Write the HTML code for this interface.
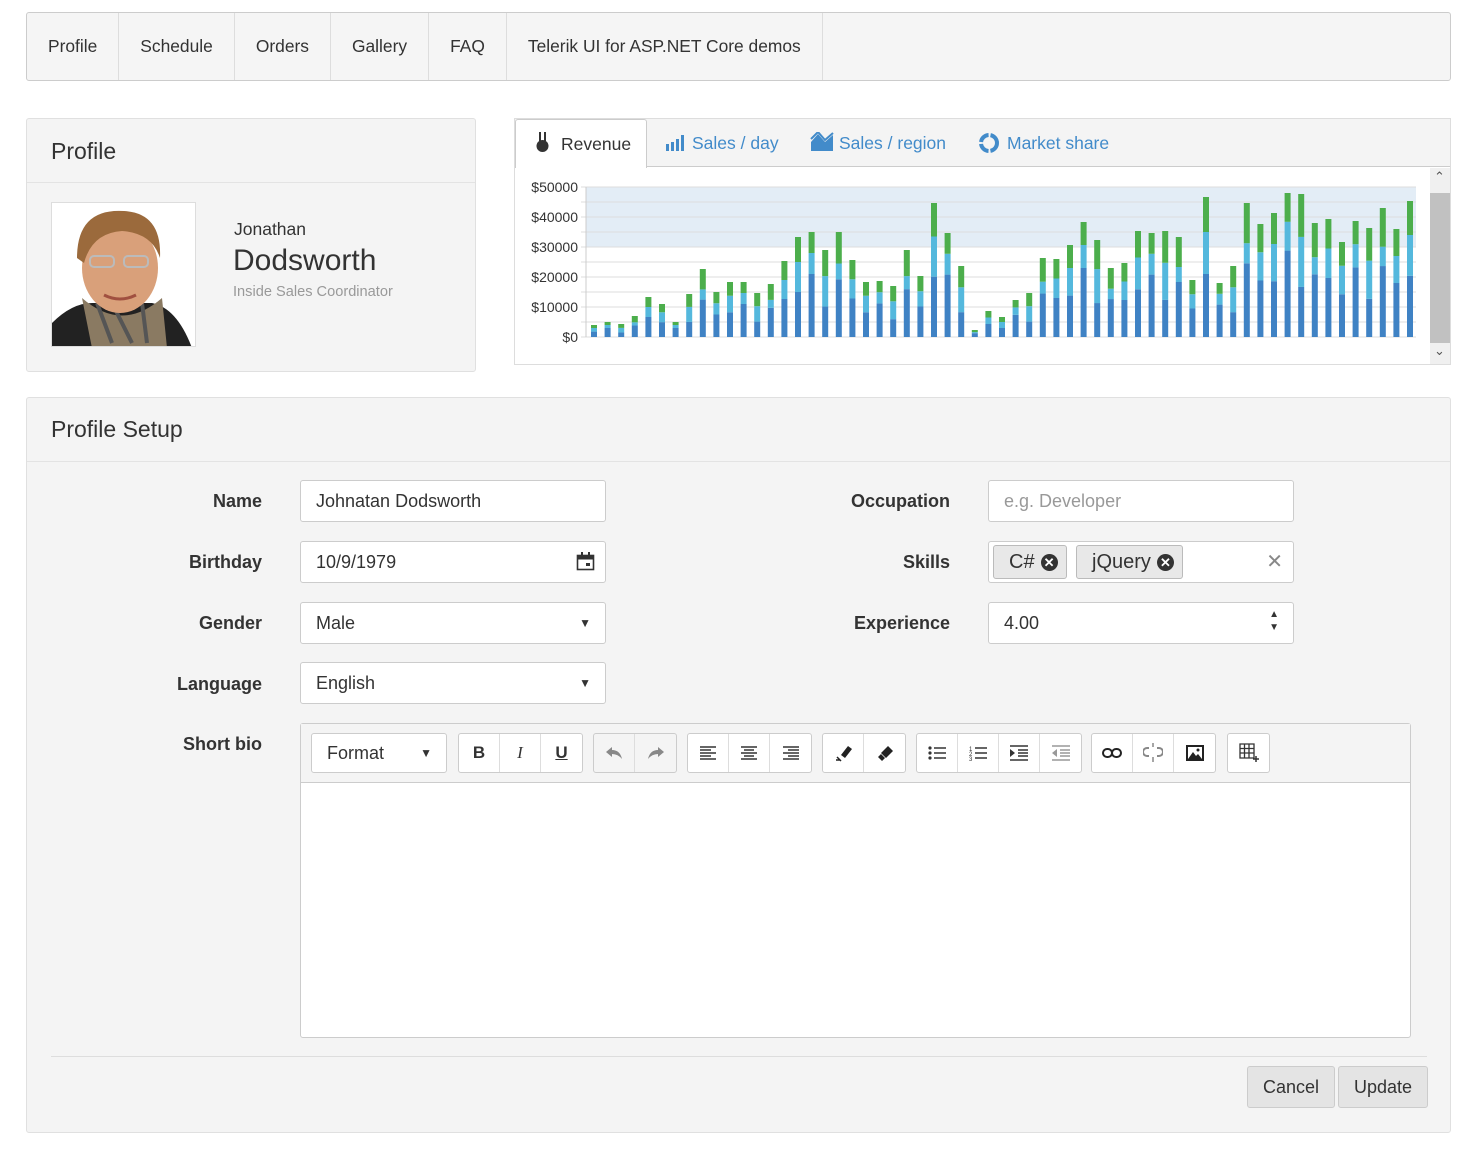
<!DOCTYPE html>
<html><head><meta charset="utf-8"><style>
*{box-sizing:border-box;margin:0;padding:0}
body{width:1478px;height:1151px;background:#fff;font-family:"Liberation Sans",sans-serif;color:#333;position:relative;overflow:hidden}
.abs{position:absolute}
.nav{left:26px;top:12px;width:1425px;height:69px;background:#f5f5f5;border:1px solid #ccc;border-radius:3px;display:flex}
.nav div{padding:0 21px;line-height:67px;font-size:17.4px;border-right:1px solid #ddd;color:#333}
.panel{background:#f4f4f4;border:1px solid #e0e0e0;border-radius:3px}
.ph{font-size:23px;color:#333;padding:0 24px;border-bottom:1px solid #e3e3e3}
.lbl{font-size:18px;font-weight:bold;text-align:right;width:200px}
.inp{background:#fff;border:1px solid #ccc;border-radius:3px;height:42px;font-size:18px;line-height:40px;padding:0 15px;color:#333}
.tb{position:absolute;top:9px;height:40px;background:#fff;border:1px solid #ccc;border-radius:3px;display:flex}
.tb span{width:41px;border-right:1px solid #ddd;display:flex;align-items:center;justify-content:center;font-size:17px}
.tb span:last-child{border-right:none}
.btn{background:#e4e4e4;border:1px solid #ccc;border-radius:3px;height:42px;line-height:40px;font-size:18px;padding:0 15px;color:#333}
.chip{background:#e8e8e8;border:1px solid #bbb;border-radius:3px;height:34px;line-height:32px;padding:0 8px 0 15px;font-size:20px;top:3px;position:absolute}
.x{display:inline-block;width:17px;height:17px;border-radius:50%;background:#333;color:#fff;font-size:13px;line-height:17px;text-align:center;vertical-align:1px;margin-left:6px;font-weight:bold}
</style></head><body>
<div class="abs nav"><div>Profile</div><div>Schedule</div><div>Orders</div><div>Gallery</div><div>FAQ</div><div>Telerik UI for ASP.NET Core demos</div></div>

<div class="abs panel" style="left:26px;top:118px;width:450px;height:254px">
 <div class="ph" style="height:64px;line-height:64px">Profile</div>
 <div class="abs" style="left:24px;top:83px;width:145px;height:145px;background:#fff;border:1px solid #ddd;overflow:hidden">
  <svg width="145" height="145" viewBox="0 0 145 145">
   <rect width="145" height="145" fill="#fff"/>
   <path d="M0 145 L0 120 Q20 100 40 100 L100 100 Q125 105 140 145Z" fill="#222"/>
   <path d="M30 95 Q70 130 110 95 L115 145 L40 145Z" fill="#8a7a62"/>
   <path d="M45 100 L60 140 M60 100 L80 140 M90 100 L95 140" stroke="#555" stroke-width="4"/>
   <ellipse cx="68" cy="65" rx="38" ry="45" fill="#d9a07a"/>
   <path d="M25 55 Q25 5 72 8 Q110 10 108 55 Q100 30 70 28 Q40 30 32 60Z" fill="#9b6a3c"/>
   <rect x="38" y="53" width="24" height="11" rx="4" fill="none" stroke="#bbb" stroke-width="2"/>
   <rect x="72" y="53" width="24" height="11" rx="4" fill="none" stroke="#bbb" stroke-width="2"/>
   <path d="M52 92 Q68 100 84 92" stroke="#a05040" stroke-width="3" fill="none"/>
  </svg>
 </div>
 <div class="abs" style="left:207px;top:100px;font-size:17.5px">Jonathan</div>
 <div class="abs" style="left:206px;top:125px;font-size:30px">Dodsworth</div>
 <div class="abs" style="left:206px;top:165px;font-size:14.6px;color:#999">Inside Sales Coordinator</div>
</div>

<div class="abs" style="left:514px;top:118px;width:937px;height:247px;border:1px solid #ddd;background:#fff">
 <div class="abs" style="left:0;top:0;width:935px;height:48px;background:#f4f4f4;border-bottom:1px solid #ccc"></div>
 <div class="abs" style="left:0;top:0;width:132px;height:49px;background:#fff;border:1px solid #ccc;border-bottom:none;border-radius:3px 3px 0 0;font-size:17.5px;line-height:48px;padding-left:45px">Revenue</div>
 <svg class="abs" style="left:18px;top:13px" width="20" height="22"><rect x="6" y="0" width="2" height="9" fill="#333"/><rect x="11" y="0" width="2" height="9" fill="#333"/><circle cx="9.5" cy="14" r="6" fill="#333"/></svg>
 <svg class="abs" style="left:150px;top:15px" width="20" height="18"><rect x="1" y="10" width="3" height="7" fill="#428bca"/><rect x="6" y="8" width="3" height="9" fill="#428bca"/><rect x="11" y="5" width="3" height="12" fill="#428bca"/><rect x="16" y="1" width="3" height="16" fill="#428bca"/></svg>
 <div class="abs" style="left:177px;top:14px;font-size:17.5px;color:#428bca">Sales / day</div>
 <svg class="abs" style="left:295px;top:13px" width="24" height="20"><path d="M1 19 L1 10 L8 2 L15 10 L23 3 L23 19Z" fill="#428bca"/><path d="M1 7 L8 0 L15 8 L23 1" stroke="#428bca" stroke-width="2" fill="none"/></svg>
 <div class="abs" style="left:324px;top:14px;font-size:17.5px;color:#428bca">Sales / region</div>
 <svg class="abs" style="left:463px;top:13px" width="22" height="22"><circle cx="11" cy="11" r="8" stroke="#428bca" stroke-width="4" fill="none" stroke-dasharray="11 2"/></svg>
 <div class="abs" style="left:492px;top:14px;font-size:17.5px;color:#428bca">Market share</div>
 <div class="abs" style="left:915px;top:49px;width:20px;height:196px;background:#f0f0f0"></div>
 <div class="abs" style="left:915px;top:74px;width:20px;height:150px;background:#c1c1c1"></div>
 <div class="abs" style="left:919px;top:50px;font-size:13px;color:#555">&#8963;</div>
 <div class="abs" style="left:919px;top:224px;font-size:13px;color:#555">&#8964;</div>
 <svg class="abs" style="left:0;top:49px" width="915" height="196" id="ch"></svg>
</div>

<div class="abs panel" style="left:26px;top:397px;width:1425px;height:736px">
 <div class="ph" style="height:64px;line-height:62px">Profile Setup</div>
 <div class="abs lbl" style="left:35px;top:93px">Name</div>
 <div class="abs inp" style="left:273px;top:82px;width:306px">Johnatan Dodsworth</div>
 <div class="abs lbl" style="left:35px;top:154px">Birthday</div>
 <div class="abs inp" style="left:273px;top:143px;width:306px">10/9/1979
  <svg class="abs" style="right:10px;top:10px" width="19" height="19"><rect x="1.5" y="3.5" width="16" height="14" fill="none" stroke="#333" stroke-width="1.6"/><rect x="1.5" y="3.5" width="16" height="4" fill="#333"/><rect x="5" y="0" width="2" height="5" fill="#333"/><rect x="12" y="0" width="2" height="5" fill="#333"/><rect x="10" y="11" width="4" height="3" fill="#333"/></svg></div>
 <div class="abs lbl" style="left:35px;top:215px">Gender</div>
 <div class="abs inp" style="left:273px;top:204px;width:306px">Male<span class="abs" style="right:14px;top:0;font-size:12px">&#9660;</span></div>
 <div class="abs lbl" style="left:35px;top:276px">Language</div>
 <div class="abs inp" style="left:273px;top:264px;width:306px">English<span class="abs" style="right:14px;top:0;font-size:12px">&#9660;</span></div>
 <div class="abs lbl" style="left:35px;top:336px">Short bio</div>

 <div class="abs lbl" style="left:723px;top:93px">Occupation</div>
 <div class="abs inp" style="left:961px;top:82px;width:306px;color:#999">e.g. Developer</div>
 <div class="abs lbl" style="left:723px;top:154px">Skills</div>
 <div class="abs inp" style="left:961px;top:143px;width:306px">
  <div class="chip" style="left:4px">C#<span class="x">✕</span></div>
  <div class="chip" style="left:87px">jQuery<span class="x">✕</span></div>
  <span class="abs" style="right:10px;top:0;color:#888;font-size:20px">✕</span></div>
 <div class="abs lbl" style="left:723px;top:215px">Experience</div>
 <div class="abs inp" style="left:961px;top:204px;width:306px">4.00<span class="abs" style="right:14px;top:-3px;font-size:10px;line-height:13px;padding-top:8px">&#9650;<br>&#9660;</span></div>

 <div class="abs" style="left:273px;top:325px;width:1111px;height:315px;background:#fff;border:1px solid #ccc;border-radius:3px">
  <div style="height:59px;background:#f4f4f4;border-bottom:1px solid #ccc;position:relative">
   <div class="tb" style="left:10px;width:136px;font-size:18px;line-height:38px;padding-left:15px;display:block">Format<div style="position:absolute;right:14px;top:0;font-size:12px">&#9660;</div></div>
   <div class="tb" style="left:157px"><span><b>B</b></span><span><i style="font-family:'Liberation Serif'">I</i></span><span><u><b>U</b></u></span></div>
   <div class="tb" style="left:292px;background:#f4f4f4"><span><svg width="18" height="14"><path d="M1 6 L7 1 L7 4 Q15 4 17 13 Q13 8 7 8 L7 11Z" fill="#888"/></svg></span><span><svg width="18" height="14"><path d="M17 6 L11 1 L11 4 Q3 4 1 13 Q5 8 11 8 L11 11Z" fill="#888"/></svg></span></div>
   <div class="tb" style="left:386px">
    <span><svg width="16" height="14"><path d="M0 1h16M0 4h11M0 7h16M0 10h11M0 13h16" stroke="#333" stroke-width="1.4"/></svg></span>
    <span><svg width="16" height="14"><path d="M0 1h16M3 4h10M0 7h16M3 10h10M0 13h16" stroke="#333" stroke-width="1.4"/></svg></span>
    <span><svg width="16" height="14"><path d="M0 1h16M5 4h11M0 7h16M5 10h11M0 13h16" stroke="#333" stroke-width="1.4"/></svg></span></div>
   <div class="tb" style="left:521px">
    <span><svg width="20" height="20"><path d="M8 12 L15 3 L19 6 L12 15Z" fill="#222"/><path d="M4 14 L8 18 M3 17 h4" stroke="#222" stroke-width="1.5"/></svg></span>
    <span><svg width="20" height="20"><path d="M6 10 L13 3 L18 8 L11 15Z M3 14 L6 11 L10 15 L7 18Z" fill="#222"/></svg></span></div>
   <div class="tb" style="left:615px">
    <span><svg width="18" height="14"><circle cx="2" cy="2" r="1.6" fill="#333"/><circle cx="2" cy="7" r="1.6" fill="#333"/><circle cx="2" cy="12" r="1.6" fill="#333"/><path d="M6 2h12M6 7h12M6 12h12" stroke="#333" stroke-width="1.4"/></svg></span>
    <span><svg width="18" height="16"><text x="0" y="6" font-size="6" fill="#333">1</text><text x="0" y="11" font-size="6" fill="#333">2</text><text x="0" y="16" font-size="6" fill="#333">3</text><path d="M6 3h12M6 8h12M6 13h12" stroke="#333" stroke-width="1.4"/></svg></span>
    <span><svg width="18" height="16"><path d="M0 1h18M8 5h10M8 8h10M8 11h10M0 15h18" stroke="#333" stroke-width="1.4"/><path d="M0 4 L5 8 L0 12Z" fill="#333"/></svg></span>
    <span><svg width="18" height="16"><path d="M0 1h18M8 5h10M8 8h10M8 11h10M0 15h18" stroke="#999" stroke-width="1.4"/><path d="M5 4 L0 8 L5 12Z" fill="#999"/></svg></span></div>
   <div class="tb" style="left:790px">
    <span><svg width="20" height="12"><rect x="1" y="2" width="9" height="8" rx="4" fill="none" stroke="#222" stroke-width="2"/><rect x="10" y="2" width="9" height="8" rx="4" fill="none" stroke="#222" stroke-width="2"/></svg></span>
    <span><svg width="20" height="20"><path d="M6 5 H4 a4 4 0 0 0 0 8 H6 M14 5 H16 a4 4 0 0 1 0 8 H14" fill="none" stroke="#888" stroke-width="2"/><path d="M10 0v4M10 14v5" stroke="#888" stroke-width="1.5"/></svg></span>
    <span><svg width="18" height="16"><rect x="1" y="1" width="16" height="14" fill="none" stroke="#222" stroke-width="2"/><path d="M2 14 L7 7 L10 11 L12 9 L16 14Z" fill="#222"/><circle cx="12" cy="5" r="1.5" fill="#222"/></svg></span></div>
   <div class="tb" style="left:926px"><span><svg width="20" height="20"><path d="M1 1h14v14H1z M1 5.5h14M1 10h14M5.5 1v14M10 1v14" fill="none" stroke="#333" stroke-width="1.3"/><path d="M17 13v6M14 16h6" stroke="#333" stroke-width="1.5"/></svg></span></div>
  </div>
 </div>
 <div class="abs" style="left:24px;top:658px;width:1376px;border-top:1px solid #ddd"></div>
 <div class="abs btn" style="left:1220px;top:668px">Cancel</div>
 <div class="abs btn" style="left:1311px;top:668px">Update</div>
</div>

<script>
var tops=[324,321,323,315,296,303,321,293,268,291,281,281,292,283,260,236,231,249,231,259,281,280,285,249,275,202,232,265,329,310,316,299,292,257,258,244,221,239,267,262,230,232,230,236,279,196,282,265,202,223,212,192,193,222,218,241,220,227,207,228,200];
var s='';var ox=514,oy=167;
s+='<rect x="71" y="19" width="830" height="60" fill="#e3edf6"/>';
var labs=['$50000','$40000','$30000','$20000','$10000','$0'];
for(var i=0;i<=10;i++){var y=186+i*15-oy;s+='<line x1="66" x2="901" y1="'+y+'" y2="'+y+'" stroke="#ddd"/>';}
for(var i=0;i<6;i++){var y=186+i*30-oy;s+='<text x="63" y="'+(y+5)+'" text-anchor="end" font-size="14" fill="#333" font-family="Liberation Sans">'+labs[i]+'</text>';}
s+='<line x1="71" x2="71" y1="19" y2="169" stroke="#ccc"/>';
for(var i=0;i<tops.length;i++){var x=593+i*13.6-ox-3;var base=336-oy;var t=tops[i]-oy;var h=base-t;
var a=[.45,.6,.35,.55,.5][i%5],b=[.3,.2,.35,.15,.25][i%5];
var h1=h*a,h2=h*b,h3=h-h1-h2;
s+='<rect x="'+x+'" y="'+(base-h1)+'" width="6" height="'+h1+'" fill="#3f82c4"/>';
s+='<rect x="'+x+'" y="'+(base-h1-h2)+'" width="6" height="'+h2+'" fill="#54b8dd"/>';
s+='<rect x="'+x+'" y="'+t+'" width="6" height="'+h3+'" fill="#4cae4c"/>';}
document.getElementById('ch').innerHTML=s;
</script>
</body></html>
